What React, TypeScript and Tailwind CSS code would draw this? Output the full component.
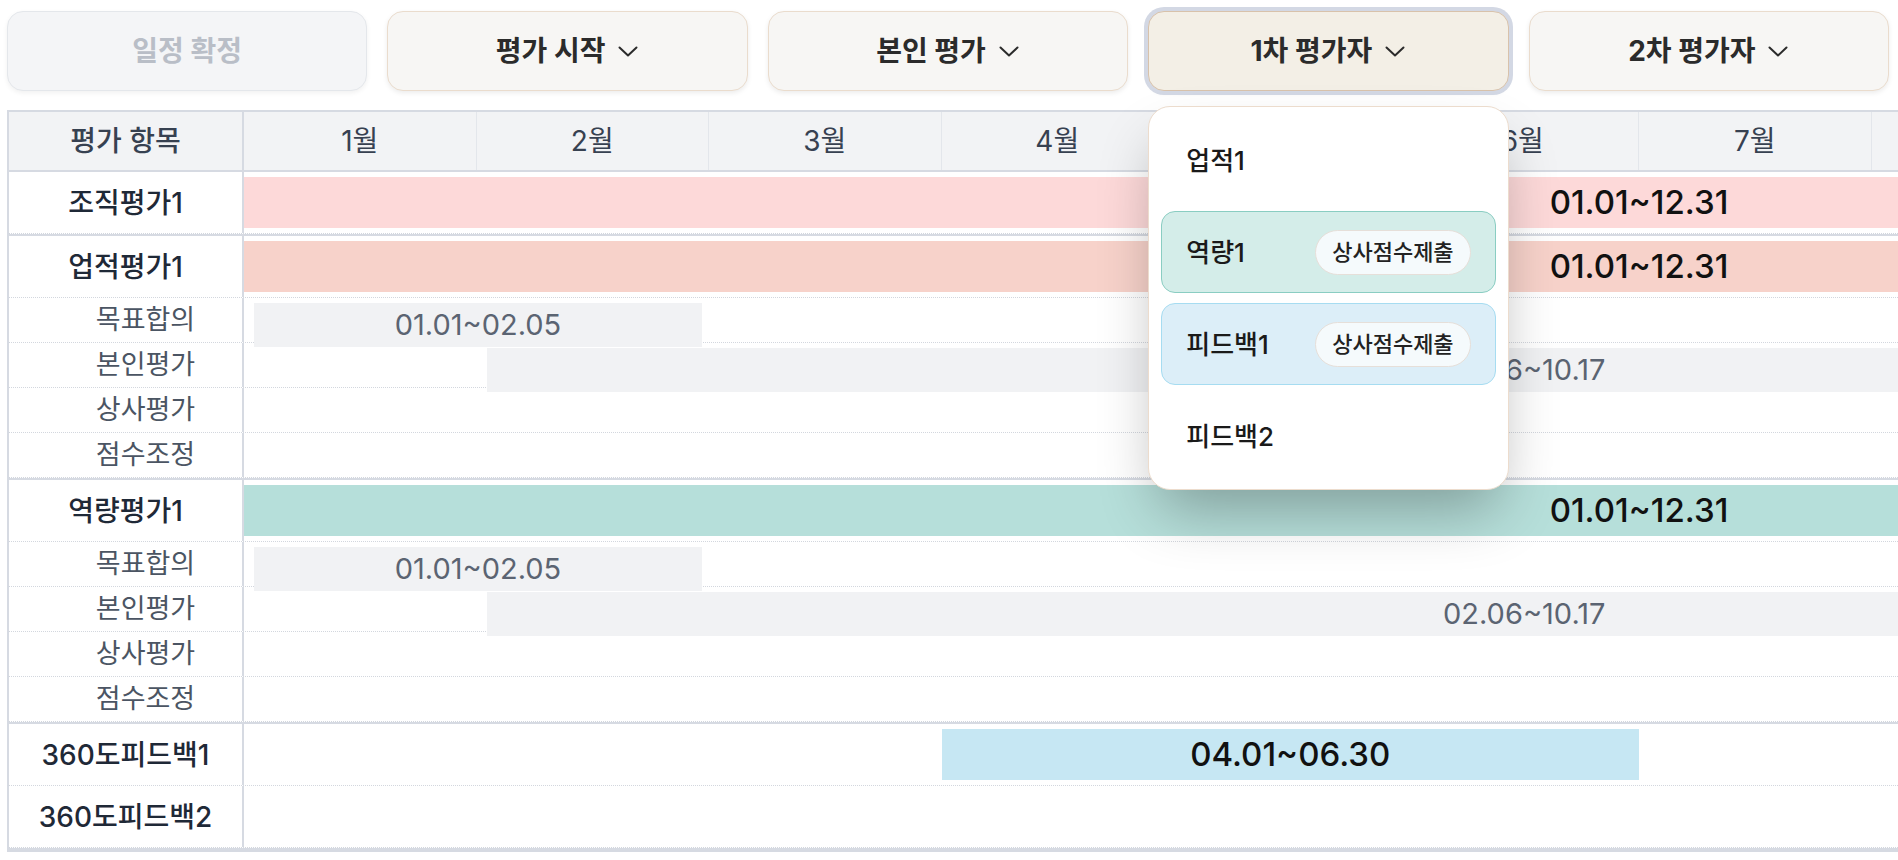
import { useState } from "react";

type Bar = { span: string; color: string; text: string };
type Row = { label: string; main?: boolean; bar?: Bar };

const months = ["1월", "2월", "3월", "4월", "5월", "6월", "7월", "8월", "9월", "10월", "11월", "12월"];

const groups: Row[][] = [
  [{ label: "조직평가1", main: true, bar: { span: "col-start-1 col-span-12", color: "bg-[#fdd9d9]", text: "01.01~12.31" } }],
  [
    { label: "업적평가1", main: true, bar: { span: "col-start-1 col-span-12", color: "bg-[#f7d2ca]", text: "01.01~12.31" } },
    { label: "목표합의", bar: { span: "col-start-1 col-span-2", color: "bg-[#f1f2f4]", text: "01.01~02.05" } },
    { label: "본인평가", bar: { span: "col-start-2 col-span-9", color: "bg-[#f1f2f4]", text: "02.06~10.17" } },
    { label: "상사평가" },
    { label: "점수조정" },
  ],
  [
    { label: "역량평가1", main: true, bar: { span: "col-start-1 col-span-12", color: "bg-[#b6dfda]", text: "01.01~12.31" } },
    { label: "목표합의", bar: { span: "col-start-1 col-span-2", color: "bg-[#f1f2f4]", text: "01.01~02.05" } },
    { label: "본인평가", bar: { span: "col-start-2 col-span-9", color: "bg-[#f1f2f4]", text: "02.06~10.17" } },
    { label: "상사평가" },
    { label: "점수조정" },
  ],
  [
    { label: "360도피드백1", main: true, bar: { span: "col-start-4 col-span-3", color: "bg-[#c6e7f3]", text: "04.01~06.30" } },
    { label: "360도피드백2", main: true },
  ],
];

const menu = [
  { name: "업적1" },
  { name: "역량1", badge: true, box: "bg-[#d4ede9] border-[#8acdc2]" },
  { name: "피드백1", badge: true, box: "bg-[#dceef8] border-[#a6dcf1]" },
  { name: "피드백2" },
];

const Chevron = () => (
  <svg width="22" height="13" viewBox="0 0 22 13" fill="none" className="shrink-0">
    <path d="M2.5 2.5 L11 10.5 L19.5 2.5" stroke="currentColor" strokeWidth="2" strokeLinecap="round" strokeLinejoin="round" />
  </svg>
);

const StepButton = ({ label, active }: { label: string; active?: boolean }) => (
  <button
    className={
      "flex h-[80px] w-full items-center justify-center gap-3 rounded-2xl border text-[28px] font-bold text-[#2b2b2b] shadow-[0_2px_5px_rgba(0,0,0,0.08)] " +
      (active ? "border-[#d8c2ab] bg-[#f3efe6] ring-4 ring-[#d3d8e4]" : "border-[#eadccd] bg-[#f7f6f4]")
    }
  >
    {label}
    <Chevron />
  </button>
);

export default function App() {
  const [open] = useState(true);

  return (
    <div className="min-h-screen w-full overflow-hidden bg-white pl-[7px] pt-[11px] font-['Inter','Noto_Sans_CJK_KR',sans-serif] text-[#1f2937]">
      <div className="mr-[9px] flex gap-5">
        <div className="flex-1">
          <button className="flex h-[80px] w-full items-center justify-center rounded-2xl border border-[#e4e7eb] bg-[#f4f5f7] text-[28px] font-bold text-[#b9bec7] shadow-[0_2px_5px_rgba(0,0,0,0.06)]">
            일정 확정
          </button>
        </div>
        <div className="flex-1">
          <StepButton label="평가 시작" />
        </div>
        <div className="flex-1">
          <StepButton label="본인 평가" />
        </div>
        <div className="relative flex-1">
          <StepButton label="1차 평가자" active />
          {open && (
            <div className="absolute left-0 right-0 top-[calc(100%+15px)] z-10 flex flex-col gap-[10px] rounded-[22px] border border-[#ecdccd] bg-white p-3 shadow-[0_30px_60px_-12px_rgba(0,0,0,0.3)]">
              {menu.map((m) => (
                <div
                  key={m.name}
                  className={
                    "flex h-[82px] items-center justify-between rounded-[14px] border px-6 " +
                    (m.box ? m.box : "border-transparent")
                  }
                >
                  <span className="text-[26px] font-medium text-[#1a1a1a]">{m.name}</span>
                  {m.badge && (
                    <span className="flex h-[45px] items-center rounded-full border border-[#e6dfd9] bg-[#f5fafc] px-4 text-[22px] font-medium text-[#222]">
                      상사점수제출
                    </span>
                  )}
                </div>
              ))}
            </div>
          )}
        </div>
        <div className="flex-1">
          <StepButton label="2차 평가자" />
        </div>
      </div>

      <div className="mt-[19px] overflow-hidden">
        <div className="w-max border-2 border-[#d6dae2]">
          <div className="flex h-[60px] border-b-2 border-[#d6dae2] bg-[#f2f3f5] text-[28px] text-[#374151]">
            <div className="flex w-[235px] shrink-0 items-center justify-center border-r-2 border-[#d6dae2] font-medium">평가 항목</div>
            {months.map((m) => (
              <div key={m} className="flex w-[232.5px] shrink-0 items-center justify-center border-r border-[#e3e6eb]">
                {m}
              </div>
            ))}
          </div>

          {groups.map((rows, gi) => (
            <div key={gi} className="border-b-2 border-[#d6dae2]">
              {rows.map((r, ri) => (
                <div
                  key={ri}
                  className={
                    "flex border-b border-dotted border-[#d3d7de] " + (r.main ? "h-[62px]" : "h-[45px]")
                  }
                >
                  <div
                    className={
                      "flex w-[235px] shrink-0 items-center justify-center border-r-2 border-[#d6dae2] " +
                      (r.main ? "text-[28px] font-medium text-[#1f2937]" : "pl-10 text-[27px] text-[#4b5563]")
                    }
                  >
                    {r.label}
                  </div>
                  <div className="grid grid-cols-[repeat(12,232.5px)] py-[5px]">
                    {r.bar && (
                      <div
                        className={
                          "flex items-center justify-center " +
                          r.bar.span +
                          " " +
                          r.bar.color +
                          (r.main ? " text-[33px] font-medium text-[#111]" : " ml-[10px] mr-[7px] text-[29px] text-[#5b6472]")
                        }
                      >
                        {r.bar.text}
                      </div>
                    )}
                  </div>
                </div>
              ))}
            </div>
          ))}
        </div>
      </div>
    </div>
  );
}
